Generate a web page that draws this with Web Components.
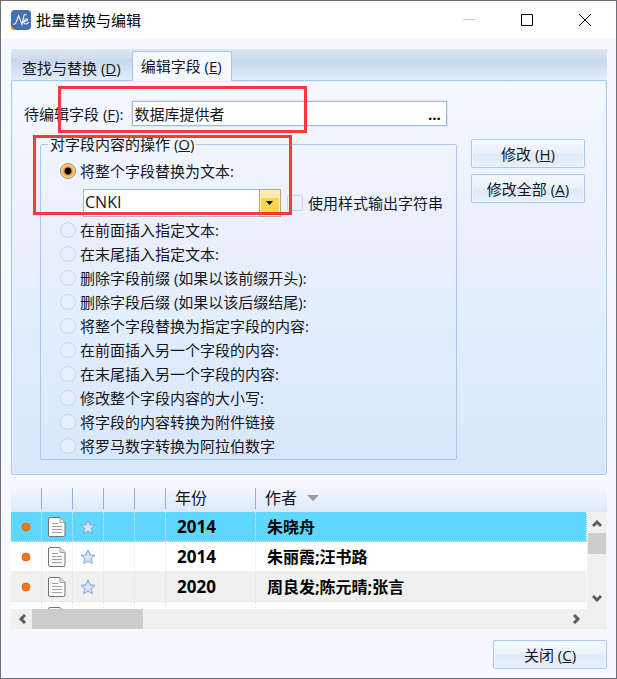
<!DOCTYPE html>
<html lang="zh-CN">
<head>
<meta charset="utf-8">
<meta name="viewport" content="width=device-width, initial-scale=1">
<title>批量替换与编辑</title>
<style>
  body {
    margin: 0;
    font: 15px/20px "Open Sans", "Noto Sans CJK SC", sans-serif;
    color: #14161c;
    --line: #a8c8f2;
    --surface: #f6f9ff;
  }
</style>
</head>
<body>
<ne-window heading="批量替换与编辑">
  <ne-tabs>
    <ne-tab>查找与替换 (<u>D</u>)</ne-tab>
    <ne-tab active>编辑字段 (<u>E</u>)</ne-tab>
    <ne-edit-panel slot="panel"></ne-edit-panel>
  </ne-tabs>
  <ne-reference-list></ne-reference-list>
  <ne-button slot="footer">关闭 (<u>C</u>)</ne-button>
</ne-window>

<script>
class NeElement extends HTMLElement {
  constructor() {
    super();
    this.attachShadow({ mode: 'open' });
  }

  connectedCallback() {
    this.shadowRoot.innerHTML = this.render();
  }
}

class NeWindow extends NeElement {
  render() {
    return `
      <style>
        :host {
          display: flex;
          flex-direction: column;
          box-sizing: border-box;
          min-height: 100vh;
          border: 1px solid #6c6e74;
          background: var(--surface);
          position: relative;
        }
        header {
          display: flex;
          align-items: center;
          height: 38px;
          padding: 0 2px 0 10px;
          background: #fff;
          color: #000;
        }
        .logo {
          width: 20px;
          height: 20px;
          margin-right: 5px;
        }
        h1 {
          flex: 1;
          margin: 0;
          font-size: 15px;
          font-weight: 400;
        }
        button {
          width: 58px;
          height: 38px;
          padding: 0;
          border: 0;
          background: none;
        }
        button svg {
          display: block;
          margin: auto;
        }
        main {
          flex: 1;
          display: flex;
          flex-direction: column;
          gap: 10px;
          padding: 10px 9px 0 10px;
        }
        footer {
          display: flex;
          justify-content: flex-end;
          padding: 11px 9px 9px;
        }
      </style>
      <header>
        <svg class="logo" viewBox="0 0 20 20" aria-hidden="true">
          <defs><clipPath id="r"><rect width="20" height="20" rx="4"/></clipPath></defs>
          <g clip-path="url(#r)">
            <rect width="20" height="20" fill="#446fb2"/>
            <path d="M0 10 Q1 18 9 20 L0 20Z" fill="#284f91"/>
            <path d="M0 15 Q2 18 6 20 L0 20Z" fill="#f0a12f"/>
          </g>
          <path d="M2 14c2 1 3-1 4-4l1.500-4.500 3.500 9L13 5.500c.4-1 1.200-1.200 2-.8M12.500 11.500c3 0 4.500-1 4-2.200-.6-1.200-3.500.4-3.700 2.700-.2 2.500 3 2.500 5.200.4" fill="none" stroke="#f4f7fc" stroke-width="1.100" stroke-linecap="round"/>
        </svg>
        <h1>${this.getAttribute('heading')}</h1>
        <button aria-label="最小化" disabled><svg width="12" height="12"><path d="M0 5.500h12" stroke="#c4c4c4"/></svg></button>
        <button aria-label="最大化"><svg width="12" height="12"><path d="M.5.5h11v11H.5z" fill="none" stroke="#000"/></svg></button>
        <button aria-label="关闭"><svg width="12" height="12"><path d="M0 0l12 12M12 0L0 12" stroke="#000"/></svg></button>
      </header>
      <main><slot></slot></main>
      <footer><slot name="footer"></slot></footer>
    `;
  }
}

class NeTabs extends NeElement {
  render() {
    return `
      <style>
        :host { display: block; }
        nav {
          display: flex;
          align-items: flex-end;
          height: 32px;
          background: linear-gradient(#dde8f5, #cfddef 9px, #c8d7ec 11px, #e3eefd);
        }
        section {
          margin-top: -1px;
          border: 1px solid var(--line);
          border-radius: 2px;
          box-shadow: inset 0 0 0 1px #e4effd;
          background: linear-gradient(#f5f8fe, #eff4fe 20%, #e8effb 45%, #e4effd 58%, #d7e6fa);
        }
      </style>
      <nav role="tablist"><slot></slot></nav>
      <section role="tabpanel"><slot name="panel"></slot></section>
    `;
  }
}

class NeTab extends NeElement {
  render() {
    return `
      <style>
        :host { display: block; }
        :host([active]) { position: relative; z-index: 1; }
        button {
          display: block;
          height: 26px;
          padding: 0 11px;
          border: 0;
          background: none;
          font: inherit;
          color: inherit;
          white-space: nowrap;
        }
        :host([active]) button {
          height: 30px;
          padding: 0 9px 2px 8px;
          border: 1px solid var(--line);
          border-bottom: 0;
          border-radius: 3px 3px 0 0;
          background: #f5f8fe;
        }
      </style>
      <button role="tab" aria-selected="${this.hasAttribute('active')}"><slot></slot></button>
    `;
  }
}

class NeButton extends NeElement {
  render() {
    return `
      <style>
        :host { display: block; width: 114px; }
        button {
          display: block;
          width: 100%;
          height: 29px;
          padding: 0;
          border: 1px solid var(--line);
          border-radius: 2px;
          box-shadow: inset 0 0 0 1px #f3f8ff;
          background: linear-gradient(#f6f9fe, #e9f1fc 48%, #dfeafa 52%, #e6f0fd);
          font: inherit;
          color: inherit;
        }
      </style>
      <button type="button"><slot></slot></button>
    `;
  }
}

class NeRadio extends NeElement {
  render() {
    return `
      <style>
        :host { display: block; }
        label {
          display: flex;
          align-items: center;
          gap: 4px;
          height: 24px;
        }
        input {
          appearance: none;
          flex: none;
          width: 16px;
          height: 16px;
          margin: 0;
          border: 1px solid #c6d8ee;
          border-radius: 50%;
          background: #e6effb;
        }
        input:checked {
          border-color: #a58a62;
          background: radial-gradient(circle, #000 3px, #fb9d32 4px, #fdc674 6px, #fbdca9 7px);
        }
      </style>
      <label><input type="radio" ${this.hasAttribute('checked') ? 'checked' : ''}><span><slot></slot></span></label>
    `;
  }
}

class NeEditPanel extends NeElement {
  render() {
    return `
      <style>
        :host {
          display: block;
          padding: 20px 21px 14px 12px;
        }
        .field {
          display: flex;
          align-items: center;
          gap: 9px;
        }
        .box {
          flex: 0 1 315px;
          display: flex;
          box-sizing: border-box;
          height: 25px;
          border: 1px solid #9cb9e0;
          outline: 1px solid #dce8f8;
          background: #fff;
        }
        .box input {
          flex: 1;
          min-width: 0;
          padding: 0 1px;
          border: 0;
          background: none;
          font: inherit;
          color: inherit;
        }
        .box button {
          width: 24px;
          padding: 0;
          border: 0;
          background: none;
          font: bold 15px/20px "Open Sans", sans-serif;
        }
        .columns {
          display: flex;
          gap: 14px;
          margin-top: 9px;
        }
        fieldset {
          flex: 1;
          min-width: 0;
          margin: 0 0 0 16px;
          padding: 6px 12px 1px 19px;
          border: 1px solid var(--line);
          border-radius: 2px;
        }
        legend {
          height: 18px;
          margin-left: -12px;
          line-height: 18px;
        }
        .value {
          display: flex;
          align-items: center;
          gap: 6px;
          height: 28px;
          margin: 6px 0 1px 23px;
        }
        .select {
          position: relative;
          flex: 0 1 198px;
          height: 28px;
        }
        select {
          appearance: none;
          width: 100%;
          height: 100%;
          padding: 0 24px 2px 1px;
          border: 1px solid #9cb9e0;
          border-radius: 0;
          background: #fff;
          font: inherit;
          font-size: 16px;
          color: inherit;
        }
        .arrow {
          position: absolute;
          top: 0;
          right: 0;
          pointer-events: none;
        }
        .value label {
          display: flex;
          align-items: center;
          gap: 5px;
          white-space: nowrap;
        }
        .value label input {
          appearance: none;
          width: 16px;
          height: 16px;
          margin: 0;
          border: 1px solid #c2d6ee;
          border-radius: 2px;
          background: #e9f1fc;
        }
        .actions {
          display: flex;
          flex-direction: column;
          gap: 6px;
          padding-top: 4px;
        }
        .marks {
          pointer-events: none;
        }
        .marks i {
          position: absolute;
          z-index: 2;
          box-sizing: border-box;
          border: 3px solid #fb393c;
        }
        .mark-field { left: 57px; top: 85px; width: 249px; height: 47px; }
        .mark-value { left: 32px; top: 134px; width: 259px; height: 80px; }
      </style>
      <div class="field">
        <label for="field">待编辑字段 (<u>F</u>):</label>
        <div class="box">
          <input id="field" type="text" value="数据库提供者">
          <button type="button" aria-label="选择字段">...</button>
        </div>
      </div>
      <div class="columns">
        <fieldset>
          <legend>对字段内容的操作 (<u>O</u>)</legend>
          <ne-radio checked>将整个字段替换为文本:</ne-radio>
          <div class="value">
            <div class="select">
              <select aria-label="替换文本"><option>CNKI</option></select>
              <svg class="arrow" width="22" height="28" aria-hidden="true">
                <rect x=".5" y=".5" width="21" height="27" fill="#fbeeb5" stroke="#b5a77e"/>
                <rect x="2" y="9" width="18" height="17" fill="#fed64b"/>
                <path d="M7 12h7l-3.500 4z" fill="#000"/>
              </svg>
            </div>
            <label><input type="checkbox"><span>使用样式输出字符串</span></label>
          </div>
          <ne-radio>在前面插入指定文本:</ne-radio>
          <ne-radio>在末尾插入指定文本:</ne-radio>
          <ne-radio>删除字段前缀 (如果以该前缀开头):</ne-radio>
          <ne-radio>删除字段后缀 (如果以该后缀结尾):</ne-radio>
          <ne-radio>将整个字段替换为指定字段的内容:</ne-radio>
          <ne-radio>在前面插入另一个字段的内容:</ne-radio>
          <ne-radio>在末尾插入另一个字段的内容:</ne-radio>
          <ne-radio>修改整个字段内容的大小写:</ne-radio>
          <ne-radio>将字段的内容转换为附件链接</ne-radio>
          <ne-radio>将罗马数字转换为阿拉伯数字</ne-radio>
        </fieldset>
        <div class="actions">
          <ne-button>修改 (<u>H</u>)</ne-button>
          <ne-button>修改全部 (<u>A</u>)</ne-button>
        </div>
      </div>
      <div class="marks"><i class="mark-field"></i><i class="mark-value"></i></div>
    `;
  }
}

const references = [
  { year: '2014', authors: '朱晓舟' },
  { year: '2014', authors: '朱丽霞;汪书路' },
  { year: '2020', authors: '周良发;陈元晴;张言' },
  { year: '', authors: '' }
];

class NeReferenceList extends NeElement {
  row({ year, authors }) {
    return `
      <tr>
        <td>${year && '<svg width="10" height="10"><circle cx="5" cy="5" r="4" fill="#fa7800" stroke="#d9663c"/></svg>'}</td>
        <td>
          <svg width="18" height="20">
            <path d="M2 .5h10l5 5v12.500q0 1.500-1.500 1.500H2q-1.500 0-1.500-1.500V2Q.5.500 2 .5z" fill="#fafafa" stroke="#757575"/>
            <path d="M12 1v4.500h5" fill="#e2e2e2" stroke="#a5a5a5"/>
            <path d="M4 6.500h6M4 9.500h10M4 12.500h10M4 15.500h10" stroke="#a0a0a0"/>
          </svg>
        </td>
        <td>${year && `
          <svg width="16" height="16">
            <path d="M8 1l2 4.800 5 .4-3.800 3.400 1.200 5L8 12l-4.400 2.600 1.200-5L1 6.200l5-.4z" fill="#d3e4f8" stroke="#83a5d2" stroke-linejoin="round"/>
          </svg>`}
        </td>
        <td></td>
        <td></td>
        <td class="year">${year}</td>
        <td class="authors">${authors}</td>
      </tr>
    `;
  }

  render() {
    const chevron = (d) => `<svg width="10" height="10"><path d="${d}" fill="none" stroke="#5c5c5c" stroke-width="3"/></svg>`;
    return `
      <style>
        :host {
          flex: 1 0 144px;
          display: grid;
          grid-template-columns: minmax(0, 1fr) 20px;
          grid-template-rows: minmax(0, 1fr) 20px;
          background: linear-gradient(#f6f9ff, #dce8f9) 0 0 / 100% 27px no-repeat;
        }
        .view {
          height: 0;
          min-height: 100%;
          overflow: hidden;
        }
        table {
          width: 100%;
          table-layout: fixed;
          border-collapse: separate;
          border-spacing: 0;
        }
        .narrow { width: 31px; }
        .medium { width: 90px; }
        th {
          height: 27px;
          padding: 0 0 2px 9px;
          box-sizing: border-box;
          background: linear-gradient(#8fb0dc, #8fb0dc) 100% 3px / 1px 21px no-repeat;
          font-size: 16px;
          font-weight: 400;
          text-align: left;
        }
        th:last-child { background: none; }
        .sort { margin-left: 10px; vertical-align: 3px; }
        td {
          box-sizing: border-box;
          height: 30px;
          padding: 0;
          border-right: 1px dotted #e3e3e3;
          border-bottom: 1px dotted #e3e3e3;
          background: #fff;
          color: #000;
          font-size: 16px;
          font-weight: 700;
          text-align: center;
        }
        td:last-child { border-right-color: #fff; }
        td svg { display: block; margin: auto; }
        tbody tr:nth-child(1) td { background: #60d7ff; }
        tbody tr:nth-child(3) td { background: #f0f0f0; }
        td.year, td.authors { padding-left: 11px; text-align: left; }
        td.year { font-size: 17px; }
        .bar {
          display: flex;
          align-items: center;
          background: #f0f0f0;
        }
        .bar button {
          display: flex;
          align-items: center;
          justify-content: center;
          width: 21px;
          height: 21px;
          padding: 0;
          border: 0;
          background: none;
        }
        .bar i { background: #cdcdcd; }
        .vertical {
          flex-direction: column;
          margin-top: 27px;
        }
        .vertical i { width: 18px; height: 21px; margin-bottom: auto; }
        .horizontal i { width: 111px; height: 20px; margin-right: auto; }
        .corner { background: #f0f0f0; }
      </style>
      <div class="view">
        <table>
          <colgroup>
            <col class="narrow" span="5">
            <col class="medium">
            <col>
          </colgroup>
          <thead>
            <tr>
              <th></th><th></th><th></th><th></th><th></th>
              <th>年份</th>
              <th>作者<svg class="sort" width="12" height="6"><path d="M0 0h12L6 6z" fill="#999"/></svg></th>
            </tr>
          </thead>
          <tbody>${references.map((item) => this.row(item)).join('')}</tbody>
        </table>
      </div>
      <div class="bar vertical">
        <button aria-label="向上滚动">${chevron('M1 8l4-4 4 4')}</button>
        <i></i>
        <button aria-label="向下滚动">${chevron('M1 2l4 4 4-4')}</button>
      </div>
      <div class="bar horizontal">
        <button aria-label="向左滚动">${chevron('M8 1L4 5l4 4')}</button>
        <i></i>
        <button aria-label="向右滚动">${chevron('M2 1l4 4-4 4')}</button>
      </div>
      <div class="corner"></div>
    `;
  }
}

customElements.define('ne-window', NeWindow);
customElements.define('ne-tabs', NeTabs);
customElements.define('ne-tab', NeTab);
customElements.define('ne-button', NeButton);
customElements.define('ne-radio', NeRadio);
customElements.define('ne-edit-panel', NeEditPanel);
customElements.define('ne-reference-list', NeReferenceList);
</script>
</body>
</html>
